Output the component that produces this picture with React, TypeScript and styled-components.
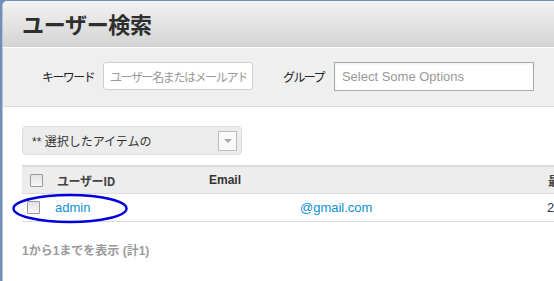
import * as React from 'react';
import styled, { createGlobalStyle } from 'styled-components';

const GlobalStyle = createGlobalStyle`
  html, body {
    margin: 0;
    padding: 0;
    overflow: hidden;
    background: #6f8fba;
  }
  body {
    font-family: "Liberation Sans", "Noto Sans CJK JP", sans-serif;
    color: #333;
  }
`;

const Panel = styled.div`
  margin: 1px 0 0 2px;
  height: 280px;
  background: #fff;
  border-top-left-radius: 5px;
  border-left: 1px solid #b9c3cf;
  overflow: hidden;
`;

const Header = styled.div`
  height: 46px;
  display: flex;
  align-items: center;
  padding-left: 19px;
  background: linear-gradient(#f3f3f3, #d3d3d3);
  border-bottom: 1px solid #fff;
`;

const Title = styled.h1`
  margin: 0 0 2px;
  font-family: "Noto Sans CJK JP", sans-serif;
  font-size: 22px;
  font-weight: 700;
  letter-spacing: -0.3px;
  color: #2e2e2e;
`;

const FilterBar = styled.div`
  height: 59px;
  box-sizing: border-box;
  display: flex;
  align-items: center;
  padding: 0 0 2px 39px;
  background: #efefef;
  border-bottom: 1px solid #dcdcdc;
`;

const Label = styled.label<{ $gap: number }>`
  font-family: "Noto Sans CJK JP", sans-serif;
  font-size: 12px;
  letter-spacing: -1.6px;
  color: #222;
  margin-right: ${(p) => p.$gap}px;
`;

const KeywordInput = styled.input`
  box-sizing: border-box;
  width: 150px;
  height: 28px;
  padding: 0 6px;
  border: 1px solid #cfcfcf;
  border-radius: 3px;
  background: #fff;
  font-family: "Noto Sans CJK JP", sans-serif;
  font-size: 12px;
  letter-spacing: -1.4px;
  margin-right: 30px;
  &::placeholder {
    color: #9a9a9a;
  }
`;

const GroupSelect = styled.div`
  box-sizing: border-box;
  width: 200px;
  height: 29px;
  display: flex;
  align-items: center;
  padding-left: 7px;
  border: 1px solid #aaa;
  background: #fff;
  box-shadow: inset 0 1px 3px #eee;
  font-size: 13px;
  color: #999;
`;

const Content = styled.div`
  padding: 19px 0 0 19px;
`;

const BulkSelect = styled.div`
  box-sizing: border-box;
  width: 220px;
  height: 29px;
  display: flex;
  align-items: center;
  justify-content: space-between;
  padding: 0 4px 0 9px;
  background: #ececec;
  border: 1px solid #dedede;
  border-radius: 4px;
  font-size: 12px;
  color: #333;
`;

const ArrowBox = styled.span`
  box-sizing: border-box;
  width: 19px;
  height: 20px;
  display: flex;
  align-items: center;
  justify-content: center;
  background: #f9f9f9;
  border: 1px solid #bbb;
  &::after {
    content: '';
    border-left: 4px solid transparent;
    border-right: 4px solid transparent;
    border-top: 4px solid #aaa;
  }
`;

const Table = styled.div`
  margin-top: 10px;
  width: 560px;
`;

const Row = styled.div<{ $head?: boolean }>`
  position: relative;
  display: grid;
  grid-template-columns: 33px 146px 339px 1fr;
  align-items: center;
  height: ${(p) => (p.$head ? 29 : 28)}px;
  box-sizing: border-box;
  background: ${(p) => (p.$head ? '#ededed' : '#fff')};
  border-top: ${(p) => (p.$head ? '2px solid #dcdcdc' : 'none')};
  border-bottom: 1px solid #dcdcdc;
  font-size: ${(p) => (p.$head ? '12px' : '13px')};
  font-weight: ${(p) => (p.$head ? 700 : 400)};
  white-space: nowrap;
`;

const Cell = styled.div<{ $shift?: number }>`
  padding-left: ${(p) => 8 + (p.$shift || 0)}px;
  overflow: hidden;
`;

const Check = styled.span`
  display: block;
  width: 11px;
  height: 11px;
  border: 1px solid #9a9a9a;
  background: linear-gradient(#e4e4e4, #f7f7f7);
  border-radius: 1px;
`;

const HeadText = styled.span`
  font-family: "Noto Sans CJK JP", "Liberation Sans", sans-serif;
  letter-spacing: -0.4px;
  color: #444;
`;

const Link = styled.a`
  color: #0c8fd6;
  text-decoration: none;
`;

const Redacted = styled.span`
  display: inline-block;
  width: 91px;
`;

const Ring = styled.svg`
  position: absolute;
  left: -10px;
  top: -1px;
  pointer-events: none;
`;

const Footer = styled.div`
  margin-top: 19px;
  font-family: "Liberation Sans", "Noto Sans CJK JP", sans-serif;
  font-size: 12px;
  font-weight: 700;
  color: #9a9a9a;
`;

export default function App() {
  return (
    <>
      <GlobalStyle />
      <Panel>
        <Header>
          <Title>ユーザー検索</Title>
        </Header>
        <FilterBar>
          <Label $gap={9}>キーワード</Label>
          <KeywordInput placeholder="ユーザー名またはメールアドレス" />
          <Label $gap={10}>グループ</Label>
          <GroupSelect>Select Some Options</GroupSelect>
        </FilterBar>
        <Content>
          <BulkSelect>
            <span>** 選択したアイテムの</span>
            <ArrowBox />
          </BulkSelect>
          <Table>
            <Row $head>
              <Cell><Check /></Cell>
              <Cell $shift={-6}><HeadText>ユーザーID</HeadText></Cell>
              <Cell>Email</Cell>
              <Cell><HeadText>最終ログイン</HeadText></Cell>
            </Row>
            <Row>
              <Cell $shift={-3}><Check /></Cell>
              <Cell $shift={-8}><Link>admin</Link></Cell>
              <Cell><Link><Redacted />@gmail.com</Link></Cell>
              <Cell $shift={-1}>2013-04-01</Cell>
              <Ring width="118" height="31" viewBox="0 0 118 31">
                <ellipse cx="58" cy="15.5" rx="56.5" ry="13.5" fill="none" stroke="#0000dc" strokeWidth="2.5" />
              </Ring>
            </Row>
          </Table>
          <Footer>1から1までを表示 (計1)</Footer>
        </Content>
      </Panel>
    </>
  );
}
